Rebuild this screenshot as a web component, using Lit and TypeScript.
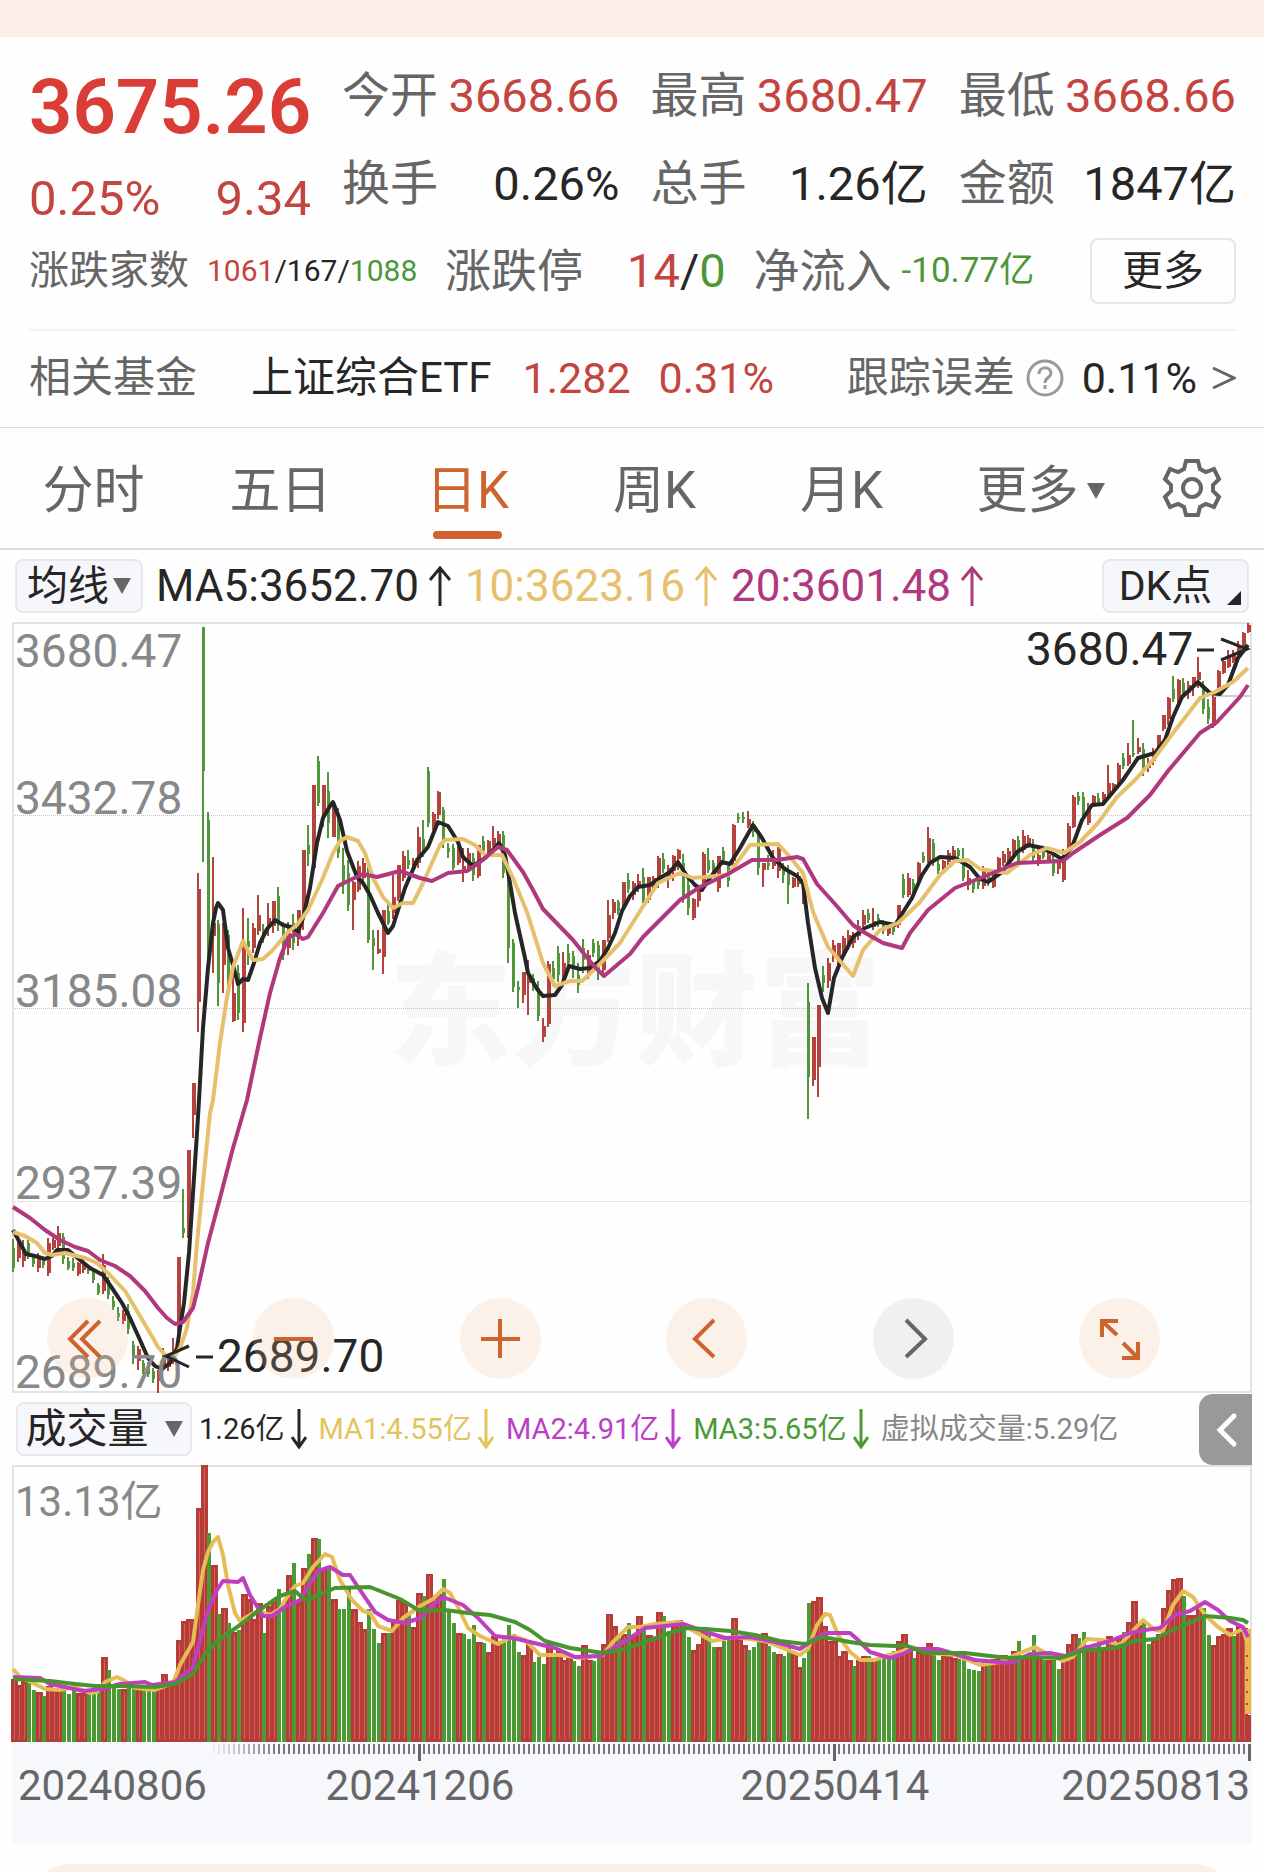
import { LitElement, html, svg, css } from "lit";
import { customElement, property, state } from "lit/decorators.js";

/** One price bar per entry: direction, high, body top, body bottom, low (chart units, downwards). */
const PRICE_BARS = `
G 616 625 645 649|R 619 621 635 639|R 617 632 638 644|G 617 620 634 636|G 632 635 641 644|R 630 634 645 649|G 634 638 642 645|R 615 620 650 653|R 615 617 625 627|R 603 610 623 626|
G 610 614 636 641|G 634 638 645 647|G 635 640 645 648|R 639 640 651 653|R 635 640 647 650|G 642 643 648 651|G 647 650 657 660|G 660 662 670 672|R 631 642 668 671|G 654 657 672 676|
G 673 678 684 687|G 684 690 694 698|R 687 690 698 701|G 681 688 706 711|G 718 722 734 741|R 723 726 738 747|G 737 740 747 751|G 739 743 751 754|G 745 748 756 760|R 747 748 758 770|
R 725 735 745 748|R 731 735 744 748|R 715 727 737 741|R 634 634 712 714|G 566 605 610 615|R 527 527 614 615|R 460 460 492 515|R 250 266 379 409|G 4 4 148 239|G 189 197 325 335|
R 234 300 313 350|G 297 301 360 383|R 300 300 342 370|G 307 312 364 372|R 345 370 398 399|G 342 350 390 397|R 285 320 400 409|G 295 318 324 342|R 300 305 325 330|R 272 292 308 312|
G 301 307 314 320|R 280 295 303 313|R 278 278 303 310|G 264 273 300 308|G 299 304 332 337|R 299 310 325 332|G 291 300 320 327|R 287 287 314 323|R 227 227 292 307|G 202 222 231 243|
R 162 162 245 249|G 133 138 180 183|R 162 162 192 204|G 149 168 200 215|R 184 184 214 214|G 185 190 230 235|G 225 242 260 271|G 237 250 282 288|R 258 259 277 307|R 238 243 267 269|
R 235 240 255 258|G 244 254 317 320|G 307 315 323 347|R 307 326 330 331|R 287 287 334 351|G 280 288 300 302|R 252 274 290 296|R 242 242 275 278|R 228 233 255 258|G 227 237 242 246|
R 235 238 246 249|R 204 214 240 245|G 197 216 225 234|G 144 148 200 204|R 189 191 204 207|R 168 169 192 196|G 184 187 220 225|G 220 225 229 235|G 221 225 245 247|R 224 228 240 242|
R 225 243 248 259|R 225 230 245 247|G 230 235 252 258|R 222 222 253 255|G 213 218 228 231|R 217 218 230 232|R 203 215 222 224|R 208 211 222 223|G 208 212 250 255|G 255 258 325 340|
G 316 320 364 369|G 358 364 367 385|R 349 349 372 380|R 337 352 360 392|G 351 355 364 368|G 358 365 393 398|R 395 403 414 419|R 338 341 401 404|G 338 345 356 363|G 323 330 352 359|
R 329 340 355 360|G 321 330 340 345|G 328 333 342 355|G 340 352 362 370|G 316 325 337 350|R 327 332 352 356|G 316 320 330 334|G 318 322 350 357|R 317 317 347 352|R 277 292 315 319|
R 276 279 290 296|G 277 279 288 292|R 259 259 283 287|G 250 257 266 270|R 258 260 272 277|R 251 258 265 269|G 245 254 277 280|R 254 254 277 280|R 253 255 262 267|R 233 235 260 265|
G 230 236 246 250|R 242 245 255 265|R 232 233 248 258|R 226 227 236 247|G 231 240 272 280|G 255 262 285 292|R 275 276 295 297|R 262 265 278 284|R 229 231 260 267|G 225 237 247 250|
G 237 240 248 255|R 233 233 265 269|G 224 228 237 242|G 240 242 258 264|R 201 202 238 244|G 190 194 196 200|G 189 194 196 200|R 188 196 203 205|G 198 201 209 214|G 211 214 245 252|
R 240 240 247 264|G 232 240 243 247|R 227 235 243 246|R 224 225 248 255|G 240 244 252 260|G 242 247 262 281|R 254 255 264 265|R 249 253 261 264|R 256 258 278 281|G 360 379 454 496|
R 414 414 457 463|R 382 382 444 474|G 343 352 360 369|R 335 340 358 365|R 317 322 332 339|R 320 320 335 349|R 313 315 330 334|R 307 312 322 327|R 309 313 320 325|R 297 303 313 317|
R 287 292 302 306|G 286 290 297 300|R 285 298 304 307|G 291 295 301 304|G 297 300 308 311|R 300 302 311 313|G 300 303 309 312|R 282 282 302 305|G 251 256 272 275|R 250 255 272 274|
G 256 260 268 272|R 239 240 258 262|G 229 233 238 240|R 204 215 238 240|G 216 220 235 243|G 236 241 248 251|R 237 238 245 251|R 227 230 239 242|R 223 227 235 237|G 225 227 233 236|
G 225 238 255 258|R 247 255 262 267|G 257 259 266 270|G 252 255 262 266|R 243 245 263 266|G 249 252 260 263|R 247 249 264 265|R 234 235 246 250|R 228 231 240 243|R 225 228 236 239|
R 216 217 229 231|G 213 217 240 244|R 207 213 227 230|R 212 215 222 225|G 216 222 235 239|R 225 232 240 243|G 224 228 234 236|R 229 232 238 240|G 232 236 250 253|R 239 240 246 251|
R 226 235 257 259|R 200 203 228 230|R 172 174 204 205|G 169 173 178 182|G 169 174 192 197|R 180 183 200 202|R 172 173 182 184|G 170 175 180 182|R 169 171 177 179|R 142 160 171 174|
R 160 161 167 169|R 140 142 160 162|G 130 135 143 146|R 120 132 141 143|G 97 130 132 134|R 115 124 129 131|G 120 126 145 153|R 135 140 145 149|R 125 130 138 142|R 112 112 123 125|
R 92 92 106 108|R 74 75 96 102|G 53 66 76 79|R 56 57 78 80|G 55 60 70 75|R 58 62 70 76|R 54 54 64 73|R 34 49 57 65|G 58 62 86 91|G 76 84 96 101|
R 72 74 103 105|R 47 48 64 67|R 38 38 50 51|R 27 33 44 45|R 27 32 38 40|R 18 22 30 34|R 9 10 24 27|R 0 2 9 10`
  .split("|")
  .map((entry) => {
    const [dir, ...levels] = entry.trim().split(" ");
    const [high, top, bottom, low] = levels.map(Number);
    return { up: dir === "R", high, top, bottom, low };
  });

/** Volume bar heights; a negative value marks a falling day. */
const VOLUME_BARS = [
  63, 57, 61, -61, -52, 50, -46, 56, 54, 53, -53, -48, -52, 49, 49, -48, -48, -54, 85, -72,
  -54, -53, 53, -54, -53, 53, -51, -51, -51, 54, 68, 61, 57, 102, 121, 123, 123, 234, 277, -209,
  177, -128, 134, -119, 110, -112, 148, 143, 123, 139, -109, 136, 141, -153, -140, 167, -179, 140, 174, -188,
  204, -203, 173, -173, 143, -133, -133, -156, 133, 120, 113, -133, -113, -99, 109, -109, 123, 142, 139, -129,
  115, 149, -146, 168, 146, 148, -163, -132, -119, 109, -108, -103, -117, 100, -99, 90, 106, 101, -104, -117,
  -108, -90, 87, 101, -80, -85, -78, 100, -86, 92, 82, 85, -81, -76, 97, 82, -81, -86, 98, 128,
  116, -104, 108, -119, 106, 126, -117, 107, 105, 130, -126, -111, 117, 122, -116, -105, 92, 98, 115, -107,
  -95, 95, -101, -102, 124, 104, 97, -92, -95, -101, 109, -96, -90, 88, -86, -94, 89, 75, -84, -139,
  141, 145, 116, 101, 101, 86, 91, 82, -76, 82, 86, -86, 84, -82, -86, -84, -91, 101, 108, 92,
  -84, 91, 92, 99, -87, -82, 86, 86, 84, -83, -82, -73, -72, -71, 83, -79, 83, 85, 87, 85,
  91, -101, 86, 86, -107, 86, -82, 82, -82, -73, 84, 98, 108, -104, -110, 97, 94, -104, 94, 106,
  99, 105, -110, 120, 141, 117, -119, -98, 102, 108, 134, 152, 163, 164, -146, 127, 127, 134, -134, -107,
  97, 106, 108, 114, -106, 116, 114, 27,
];

const PRICE_LINES = [
  {
    color: "#262626",
    points:
      "13,607 19,618 26,631 35,633 45,636 52,633 57,627 68,627 80,637 90,645 103,652 112,665 122,680 130,695 140,717 148,735 155,743 162,746 170,740 177,725 180,705 184,680 189,630 193,570 197,510 199,477 203,405 208,345 213,300 216,285 218,280 223,287 228,325 233,342 238,361 243,356 248,357 254,340 260,320 267,306 275,297 283,302 291,304 298,309 303,295 310,265 317,220 323,195 330,183 333,179 340,197 347,228 357,254 363,260 370,272 378,290 388,310 393,303 405,265 417,237 428,224 438,199 448,203 458,219 463,234 473,243 485,235 493,227 499,220 505,232 510,260 515,290 525,335 528,350 537,366 543,373 555,372 562,362 569,343 580,346 590,345 600,338 608,325 615,310 622,288 630,273 638,264 650,262 660,255 670,249 678,239 687,253 695,262 702,267 710,255 722,239 730,241 740,225 753,202 762,215 773,235 785,246 797,253 803,260 808,300 815,345 822,375 828,390 834,355 842,335 853,314 865,305 880,299 895,302 912,275 922,252 930,240 940,234 955,235 970,244 980,256 988,259 1002,249 1017,229 1028,222 1043,225 1062,236 1072,224 1082,197 1092,182 1103,181 1123,157 1138,135 1155,130 1165,117 1173,94 1182,74 1198,59 1210,70 1220,71 1228,62 1238,35 1248,22",
  },
  {
    color: "#e6c06c",
    points:
      "13,609 25,613 37,620 45,630 52,632 65,630 85,635 97,640 110,652 125,668 137,688 150,710 158,724 166,733 173,735 180,725 187,705 193,670 197,620 203,560 210,490 213,477 220,420 227,374 233,344 243,318 253,337 263,336 272,328 288,309 297,302 308,287 322,257 333,230 340,218 347,214 358,218 365,230 373,255 383,274 393,285 403,280 413,280 423,260 440,222 445,217 463,216 475,222 485,232 502,232 513,255 527,289 543,340 555,363 570,358 582,358 597,344 620,320 647,277 658,260 680,250 693,255 728,252 738,238 750,222 778,221 790,234 803,250 813,289 828,324 840,338 853,353 863,327 880,307 898,300 920,279 940,252 955,238 968,237 980,246 1007,250 1030,232 1047,225 1064,230 1080,219 1098,200 1117,174 1135,157 1153,137 1173,110 1187,92 1200,75 1215,69 1233,59 1248,45",
  },
  {
    color: "#b0387d",
    points:
      "13,584 30,595 45,607 60,617 75,624 88,628 100,637 115,643 130,653 145,668 158,685 167,695 175,701 183,699 193,685 198,665 208,620 220,575 233,525 247,477 260,415 270,370 280,335 288,315 295,311 303,316 308,314 323,290 338,263 350,257 363,251 377,254 400,248 420,255 432,258 448,250 467,248 480,239 498,224 507,227 523,249 533,267 543,286 573,317 593,342 604,353 630,331 643,314 663,294 680,277 700,264 728,251 752,237 777,237 797,234 803,236 817,261 835,281 853,302 860,307 883,320 902,325 910,310 928,287 955,265 983,254 1017,240 1040,239 1063,238 1073,230 1100,212 1127,195 1150,172 1168,148 1200,110 1217,99 1240,74 1248,62",
  },
];

const VOLUME_LINES = [
  {
    color: "#e6bd55",
    points:
      "13,204 20,212 33,218 45,224 60,225 75,222 90,228 97,227 105,217 117,212 125,216 135,223 155,225 173,218 180,200 193,177 198,140 203,105 208,87 213,77 218,72 223,90 228,120 235,148 240,156 250,150 258,146 270,150 280,144 287,132 295,121 303,118 313,102 325,89 332,92 340,115 352,135 363,146 370,148 378,161 392,166 403,153 420,141 433,134 443,124 450,128 458,142 468,163 480,171 498,179 513,171 525,175 540,190 560,190 580,193 603,190 613,177 628,162 640,162 655,159 680,157 692,165 712,176 735,172 765,176 780,182 800,190 808,184 817,160 825,149 830,150 838,170 850,187 860,195 875,195 885,191 900,187 912,182 930,188 955,190 980,200 1000,197 1015,190 1035,182 1047,189 1063,196 1073,192 1087,174 1103,175 1120,180 1130,169 1143,155 1155,165 1163,166 1173,140 1183,126 1193,132 1205,150 1218,162 1230,170 1243,164 1248,180",
  },
  {
    color: "#bf3fc0",
    points:
      "13,212 40,213 50,219 65,222 83,226 102,224 120,219 145,217 152,220 175,217 193,202 200,175 208,145 217,125 223,116 238,117 243,113 250,130 263,151 272,151 285,142 300,135 307,123 318,106 330,102 343,110 350,110 360,125 375,147 388,155 405,158 420,153 433,140 443,132 463,140 478,153 495,171 513,173 530,177 555,183 575,192 600,191 615,182 630,173 645,163 665,161 683,159 700,165 725,173 750,172 775,177 800,184 813,175 825,168 850,168 857,174 870,187 890,193 903,189 913,184 938,184 955,189 975,195 1010,198 1030,189 1050,188 1065,191 1085,183 1110,176 1130,168 1145,165 1160,163 1175,150 1190,146 1205,137 1218,145 1230,156 1243,162 1248,172",
  },
  {
    color: "#48952f",
    points:
      "13,214 50,216 75,219 95,221 120,221 155,222 175,219 193,209 205,189 220,174 240,160 258,146 280,131 295,126 305,135 317,131 335,123 370,122 385,128 400,134 420,146 445,145 468,148 490,150 515,157 530,165 545,176 570,183 603,188 625,184 650,175 670,168 685,163 705,164 730,166 755,170 780,176 805,179 823,172 850,177 870,180 895,181 905,180 925,188 965,188 990,191 1010,193 1030,192 1060,193 1085,185 1115,183 1135,176 1155,174 1175,164 1205,151 1230,153 1243,155 1248,158",
  },
];

const barX = (index: number) => 13 + index * 5;

const chartStyles = css`
  :host {
    display: block;
  }
  svg {
    display: block;
    width: 100%;
    height: auto;
    overflow: visible;
  }
  text {
    font-family: Roboto, "Noto Sans CJK SC", sans-serif;
  }
  .frame {
    fill: none;
    stroke: #e3e3e3;
    stroke-width: 2;
  }
  .line {
    fill: none;
    stroke-width: 4;
    stroke-linejoin: round;
  }
`;

@customElement("price-chart")
export class PriceChart extends LitElement {
  static styles = [
    chartStyles,
    css`
      .grid {
        stroke: #c4c4c4;
        stroke-dasharray: 1 1;
      }
      .watermark {
        fill: #f7f7f7;
        font-size: 123px;
        font-weight: 900;
      }
      .up {
        fill: #b4433d;
      }
      .down {
        fill: #52963c;
      }
      .scale {
        fill: #888;
        font-size: 46px;
      }
      .mark {
        fill: #262626;
        font-size: 46px;
      }
      .pointer {
        fill: none;
        stroke: #262626;
        stroke-width: 3;
      }
      .last {
        stroke: #cfcfcf;
        stroke-width: 2;
      }
    `,
  ];

  render() {
    const scale: [string, number][] = [
      ["3680.47", 44],
      ["3432.78", 191],
      ["3185.08", 384],
      ["2937.39", 576],
      ["2689.70", 765],
    ];
    return html`<svg viewBox="12 0 1240 770" role="img" aria-label="日K">
      <text class="watermark" x="389" y="432">东方财富</text>
      ${[192, 385, 578].map((y) => svg`<line class="grid" x1="13" x2="1251" y1=${y + 0.5} y2=${y + 0.5}></line>`)}
      <line class="last" x1="1215" x2="1251" y1="73" y2="73"></line>
      <rect class="frame" x="13" y="0" width="1238" height="769"></rect>
      ${PRICE_BARS.map((bar, i) => {
        const x = barX(i);
        return svg`<g class=${bar.up ? "up" : "down"}>
          <rect x=${x - 1} y=${bar.high} width="2" height=${Math.max(1, bar.low - bar.high)}></rect>
          <rect x=${x - 1} y=${bar.top} width=${bar.up ? 4 : 3} height=${Math.max(1, bar.bottom - bar.top)}></rect>
        </g>`;
      })}
      ${PRICE_LINES.map((l) => svg`<polyline class="line" stroke=${l.color} points=${l.points}></polyline>`)}
      ${scale.map(([label, y]) => svg`<text class="scale" x="15" y=${y}>${label}</text>`)}
      <text class="mark" x="1026" y="42">3680.47</text>
      <path class="pointer" d="M1197 27H1214M1221 16L1247 26L1221 37"></path>
      <text class="mark" x="217" y="749">2689.70</text>
      <path class="pointer" d="M196 734H213M189 723L166 733L189 744"></path>
    </svg>`;
  }
}

@customElement("volume-chart")
export class VolumeChart extends LitElement {
  static styles = [
    chartStyles,
    css`
      .up {
        fill: #d4605c;
        stroke: #b53c37;
        stroke-width: 3;
      }
      .down {
        fill: #4c9a34;
      }
      .forecast {
        fill: #e9b64a;
      }
      .dash {
        stroke: #b4433d;
        stroke-width: 2;
        stroke-dasharray: 2 10;
      }
      .scale {
        fill: #888;
        font-size: 42px;
      }
      .axis {
        fill: #f7f8fb;
      }
      .tick {
        stroke: #777;
        stroke-width: 2;
      }
      .major {
        stroke: #666;
        stroke-width: 3;
      }
      .date {
        fill: #666;
        font-size: 42px;
      }
    `,
  ];

  render() {
    const base = 277;
    const dates: [string, number, string][] = [
      ["20240806", 18, "start"],
      ["20241206", 420, "middle"],
      ["20250414", 835, "middle"],
      ["20250813", 1250, "end"],
    ];
    return html`<svg viewBox="12 0 1240 378" role="img" aria-label="成交量">
      <path class="frame" d="M13 278V1H1251V278"></path>
      <rect class="axis" x="12" y="278" width="1240" height="100"></rect>
      ${VOLUME_BARS.map((value, i) => {
        const h = Math.abs(value);
        const x = barX(i);
        return value < 0
          ? svg`<rect class="down" x=${x - 1} y=${base - h} width="4" height=${h}></rect>`
          : svg`<rect class="up" x=${x - 0.5} y=${base - h + 1.5} width=${i === 247 ? 2 : 4} height=${h - 3}></rect>`;
      })}
      <rect class="forecast" x="1245" y="164" width="6" height="85"></rect>
      <line class="dash" x1="1247" x2="1247" y1="190" y2="248"></line>
      ${VOLUME_LINES.map((l) => svg`<polyline class="line" stroke=${l.color} points=${l.points}></polyline>`)}
      <text class="scale" x="15" y="51">13.13亿</text>
      ${VOLUME_BARS.slice(40).map((_, i) => {
        const x = barX(i + 40) + 1;
        return svg`<line class="tick" x1=${x} x2=${x} y1="279" y2="289" opacity=${Math.min(1, (i + 1) / 14)}></line>`;
      })}
      ${[419, 834, 1249].map((x) => svg`<line class="major" x1=${x + 0.5} x2=${x + 0.5} y1="279" y2="296"></line>`)}
      ${dates.map(([d, x, anchor]) => svg`<text class="date" x=${x} y="335" text-anchor=${anchor}>${d}</text>`)}
    </svg>`;
  }
}

@customElement("trend-arrow")
export class TrendArrow extends LitElement {
  @property({ type: Boolean }) down = false;
  static styles = css`
    :host {
      display: inline-flex;
    }
    svg {
      display: block;
      width: 24px;
      height: 40px;
      fill: none;
      stroke: currentColor;
      stroke-width: 3;
    }
    .down {
      width: 16px;
    }
  `;
  render() {
    return this.down
      ? html`<svg class="down" viewBox="0 0 16 40" aria-hidden="true"><path d="M8 0V38M1 28L8 38L15 28"></path></svg>`
      : html`<svg viewBox="0 0 24 40" aria-hidden="true"><path d="M12 40V2M2 14L12 2L22 14"></path></svg>`;
  }
}

@customElement("app-root")
export class AppRoot extends LitElement {
  @state() private period = "日K";

  static styles = css`
    :host {
      display: block;
      background: #fefefe;
      color: #262626;
      font-family: Roboto, "Noto Sans CJK SC", sans-serif;
    }
    * {
      box-sizing: border-box;
    }
    button {
      margin: 0;
      padding: 0;
      border: 0;
      background: none;
      color: inherit;
      font: inherit;
      cursor: pointer;
    }
    .banner {
      height: 37px;
      background: #fbeee6;
    }
    .up {
      color: #c4453f;
    }
    .down {
      color: #4d9638;
    }
    .label {
      color: #666;
    }
    .quote {
      padding: 28px 28px 0 29px;
    }
    .figures {
      display: grid;
      grid-template-columns: repeat(4, 1fr);
      column-gap: 31px;
      font-size: 47px;
      line-height: 60px;
    }
    .figures .label {
      font-size: 48px;
    }
    .headline {
      display: flex;
      flex-direction: column;
      gap: 20px;
    }
    .headline .pair {
      font-size: 49px;
    }
    .price {
      color: #d93d35;
      font-size: 76px;
      font-weight: 600;
      line-height: 84px;
    }
    .pair {
      display: flex;
      justify-content: space-between;
      white-space: nowrap;
    }
    .column {
      display: flex;
      flex-direction: column;
      gap: 28px;
      padding-top: 1px;
    }
    .breadth {
      display: flex;
      align-items: center;
      justify-content: space-between;
      margin-top: 9px;
      height: 66px;
      white-space: nowrap;
      line-height: 60px;
    }
    .breadth .group {
      display: flex;
      align-items: center;
    }
    .advance {
      gap: 18px;
      font-size: 30px;
    }
    .advance .label {
      font-size: 40px;
    }
    .limit {
      gap: 44px;
      font-size: 47px;
    }
    .inflow {
      gap: 10px;
      font-size: 35px;
    }
    .limit .label,
    .inflow .label {
      font-size: 46px;
    }
    .more {
      width: 146px;
      height: 66px;
      margin-left: 28px;
      border: 2px solid #e6e6e6;
      border-radius: 8px;
      font-size: 41px;
      line-height: 60px;
    }
    .fund {
      display: flex;
      align-items: center;
      margin-top: 25px;
      padding-bottom: 2px;
      height: 98px;
      border-top: 2px solid #f3f3f3;
      color: inherit;
      text-decoration: none;
      white-space: nowrap;
      font-size: 43px;
      line-height: 60px;
    }
    .fund .label,
    .fund .name {
      font-size: 42px;
    }
    .fund .name {
      margin-left: 54px;
    }
    .fund .last {
      margin-left: 31px;
    }
    .fund .change {
      margin-left: 28px;
    }
    .fund .error {
      display: flex;
      align-items: center;
      margin-left: auto;
    }
    .help {
      width: 38px;
      height: 38px;
      margin: 0 18px 0 11px;
    }
    .chevron {
      width: 24px;
      height: 30px;
      margin-left: 15px;
    }
    .periods {
      display: grid;
      grid-template-columns: repeat(5, 187fr) 211fr 118fr;
      align-items: stretch;
      height: 123px;
      border: solid #dcdcdc;
      border-width: 1px 0 2px;
      color: #666;
      font-size: 51px;
      line-height: 60px;
    }
    .period {
      display: flex;
      flex-direction: column;
      align-items: center;
      justify-content: flex-end;
      gap: 10px;
      padding-bottom: 9px;
    }
    .period::after {
      content: "";
      width: 69px;
      height: 8px;
      border-radius: 4px;
    }
    .selected {
      color: #cd632f;
    }
    .selected::after {
      background: #cf6230;
    }
    .period .text {
      display: flex;
      align-items: center;
      gap: 8px;
    }
    .gear {
      padding: 0 26px 0 0;
    }
    .gear svg {
      display: block;
      width: 60px;
      height: 60px;
      margin: auto;
    }
    .tool {
      display: flex;
      align-items: center;
      justify-content: center;
      height: 54px;
      border: 2px solid #e6e8ec;
      border-radius: 8px;
      background: #f6f7fa;
      font-size: 41px;
      line-height: 50px;
    }
    .caret {
      width: 18px;
      height: 18px;
      fill: #666;
    }
    .averages {
      display: flex;
      align-items: center;
      height: 73px;
      padding: 0 15px 2px;
      font-size: 44px;
      line-height: 54px;
      white-space: nowrap;
    }
    .averages .tool {
      width: 128px;
      gap: 4px;
    }
    .averages .value {
      display: flex;
      align-items: center;
      gap: 9px;
      margin-left: 13px;
    }
    .averages .dk {
      position: relative;
      width: 147px;
      margin-left: auto;
      padding-right: 16px;
    }
    .corner {
      position: absolute;
      right: 6px;
      bottom: 6px;
      width: 14px;
      height: 14px;
      fill: #262626;
    }
    .ma10 {
      color: #e6c06c;
    }
    .ma20 {
      color: #b0387d;
    }
    .canvas {
      position: relative;
      margin: 0 12px;
    }
    .controls {
      position: absolute;
      left: 35px;
      right: 92px;
      bottom: 14px;
      display: flex;
      justify-content: space-between;
    }
    .round {
      width: 81px;
      height: 81px;
      border-radius: 50%;
      background: rgba(244, 190, 150, 0.2);
      color: #cd632f;
    }
    .round svg {
      display: block;
      width: 100%;
      fill: none;
      stroke: currentColor;
      stroke-width: 4;
    }
    .next {
      background: rgba(120, 120, 120, 0.1);
      color: #666;
    }
    .volumes {
      display: flex;
      align-items: center;
      height: 72px;
      padding: 0 12px 0 16px;
      font-size: 29px;
      line-height: 54px;
      white-space: nowrap;
    }
    .volumes .tool {
      width: 176px;
      gap: 16px;
      margin-right: 7px;
    }
    .volumes .value {
      display: flex;
      align-items: center;
      gap: 6px;
      margin-right: 12px;
    }
    .v1 {
      color: #e3c45a;
    }
    .v2 {
      color: #bb3fc4;
    }
    .v3 {
      color: #4b9a35;
    }
    .virtual {
      color: #888;
    }
    .drawer {
      width: 53px;
      height: 71px;
      margin-left: auto;
      border-radius: 14px 0 0 14px;
      background: #999;
    }
    .drawer svg {
      display: block;
      width: 53px;
      height: 71px;
    }
    .footer {
      height: 8px;
      margin-top: 21px;
      padding: 0 33px;
      overflow: hidden;
    }
    .sheet {
      height: 80px;
      border-radius: 36px;
      background: #fbeee6;
    }
  `;

  private caret() {
    return html`<svg class="caret" viewBox="0 0 18 18" aria-hidden="true"><path d="M0 1H18L9 17Z"></path></svg>`;
  }

  private pair(label: string, value: string, tone = "") {
    return html`<div class="pair"><span class="label">${label}</span><span class=${tone}>${value}</span></div>`;
  }

  private round(label: string, d: string, extra = "") {
    return html`<button class="round ${extra}" aria-label=${label}>
      <svg viewBox="0 0 81 81" aria-hidden="true"><path d=${d}></path></svg>
    </button>`;
  }

  render() {
    const periods = ["分时", "五日", "日K", "周K", "月K", "更多"];
    return html`
      <div class="banner"></div>
      <section class="quote">
        <div class="figures">
          <div class="headline">
            <div class="price">3675.26</div>
            <div class="pair up"><span>0.25%</span><span>9.34</span></div>
          </div>
          <div class="column">${this.pair("今开", "3668.66", "up")}${this.pair("换手", "0.26%")}</div>
          <div class="column">${this.pair("最高", "3680.47", "up")}${this.pair("总手", "1.26亿")}</div>
          <div class="column">${this.pair("最低", "3668.66", "up")}${this.pair("金额", "1847亿")}</div>
        </div>
        <div class="breadth">
          <div class="group advance">
            <span class="label">涨跌家数</span>
            <span><span class="up">1061</span>/167/<span class="down">1088</span></span>
          </div>
          <div class="group limit">
            <span class="label">涨跌停</span>
            <span><span class="up">14</span>/<span class="down">0</span></span>
          </div>
          <div class="group inflow">
            <span class="label">净流入</span>
            <span class="down">-10.77亿</span>
          </div>
          <button class="more">更多</button>
        </div>
        <a class="fund" href="#fund">
          <span class="label">相关基金</span>
          <span class="name">上证综合ETF</span>
          <span class="up last">1.282</span>
          <span class="up change">0.31%</span>
          <span class="error">
            <span class="label">跟踪误差</span>
            <svg class="help" viewBox="0 0 38 38" fill="none" stroke="#999" stroke-width="3" aria-hidden="true">
              <circle cx="19" cy="19" r="17"></circle>
              <path d="M13 15C13 7 25 7 25 14C25 19 19 18 19 24M19 26V30"></path>
            </svg>
            <span>0.11%</span>
            <svg class="chevron" viewBox="0 0 24 30" fill="none" stroke="#666" stroke-width="3" aria-hidden="true">
              <path d="M1 5L22 15L1 25"></path>
            </svg>
          </span>
        </a>
      </section>
      <nav class="periods">
        ${periods.map(
          (name) => html`<button
            class="period ${name === this.period ? "selected" : ""}"
            aria-pressed=${name === this.period}
            @click=${() => (this.period = name)}
          >
            <span class="text">${name}${name === "更多" ? this.caret() : ""}</span>
          </button>`,
        )}
        <button class="gear" aria-label="设置">
          <svg viewBox="-30 -30 60 60" fill="none" stroke="#666" stroke-width="4" aria-hidden="true">
            <path
              d="M-6 -27H6L8 -19L14 -16L22 -19L27 -9L21 -3V3L27 9L22 19L14 16L8 19L6 27H-6L-8 19L-14 16L-22 19L-27 9L-21 3V-3L-27 -9L-22 -19L-14 -16L-8 -19Z"
            ></path>
            <circle r="9"></circle>
          </svg>
        </button>
      </nav>
      <div class="averages">
        <button class="tool">均线${this.caret()}</button>
        <span class="value">MA5:3652.70<trend-arrow></trend-arrow></span>
        <span class="value ma10">10:3623.16<trend-arrow></trend-arrow></span>
        <span class="value ma20">20:3601.48<trend-arrow></trend-arrow></span>
        <button class="tool dk">
          DK点<svg class="corner" viewBox="0 0 14 14" aria-hidden="true"><path d="M14 0V14H0Z"></path></svg>
        </button>
      </div>
      <div class="canvas">
        <price-chart></price-chart>
        <div class="controls">
          ${this.round("最早", "M41 23L23 41L41 59M53 23L35 41L53 59")}
          ${this.round("缩小", "M21 41H60")}
          ${this.round("放大", "M21 41H60M40 21V60")}
          ${this.round("前移", "M48 22L29 41L48 59")}
          ${this.round("后移", "M33 22L52 41L33 59", "next")}
          ${this.round("全屏", "M23 39V23H39M23 23L38 37M43 60H59V44M59 60L44 45")}
        </div>
      </div>
      <div class="volumes">
        <button class="tool">成交量${this.caret()}</button>
        <span class="value">1.26亿<trend-arrow down></trend-arrow></span>
        <span class="value v1">MA1:4.55亿<trend-arrow down></trend-arrow></span>
        <span class="value v2">MA2:4.91亿<trend-arrow down></trend-arrow></span>
        <span class="value v3">MA3:5.65亿<trend-arrow down></trend-arrow></span>
        <span class="value virtual">虚拟成交量:5.29亿</span>
        <button class="drawer" aria-label="展开">
          <svg viewBox="0 0 53 71" fill="none" stroke="#fff" stroke-width="5" stroke-linecap="round" aria-hidden="true">
            <path d="M35 22L21 36L35 50"></path>
          </svg>
        </button>
      </div>
      <div class="canvas"><volume-chart></volume-chart></div>
      <footer class="footer"><div class="sheet"></div></footer>
    `;
  }
}
